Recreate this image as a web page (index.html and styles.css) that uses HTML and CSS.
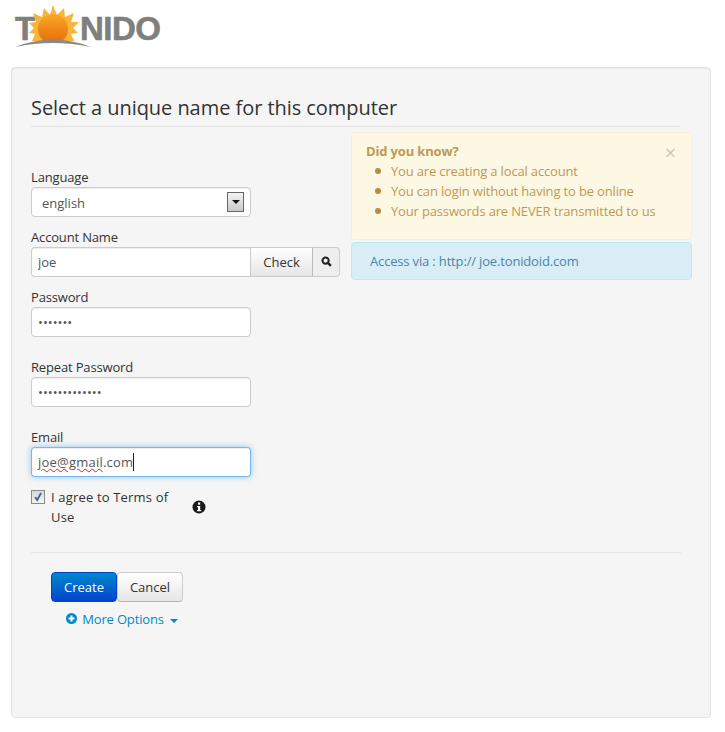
FILE: index.html
```html
<!DOCTYPE html>
<html lang="en">
<head>
    <meta charset="UTF-8">
    <title>Tonido Setup</title>
    <link rel="stylesheet" href="styles.css">
</head>
<body>
    <div class="logo">
        <span class="logo-t">T</span>
        <span class="logo-rest">NIDO</span>
        <svg class="logo-sun" width="100" height="50" viewBox="0 0 100 50">
            <defs>
                <linearGradient id="disc" x1="0" y1="0" x2="0" y2="1">
                    <stop offset="0" stop-color="#f9a825"/>
                    <stop offset="1" stop-color="#e8730c"/>
                </linearGradient>
            </defs>
            <polygon fill="#f7b53c" points="53,5 57,15 64,8 65,17 74,13 71,22 79,22 73,28 78,33 71,34 74,41 32,41 35,34 29,33 34,28 29,23 36,22 33,13 42,17 44,8 50,15"/>
            <path d="M42.8 40 A15 15 0 1 1 63.2 40 Z" fill="url(#disc)"/>
            <path d="M15 47 Q53 32 91 47 Q53 39 15 47 Z" fill="#8a8a88"/>
        </svg>
    </div>

    <div class="panel">
        <h1 class="title">Select a unique name for this computer</h1>

        <div class="columns">
            <div class="form-col">
                <div class="form-group">
                    <label>Language</label>
                    <div class="field select">
                        <span class="select-value">english</span>
                        <span class="select-arrow"></span>
                    </div>
                </div>
                <div class="form-group">
                    <label for="account">Account Name</label>
                    <div class="input-group">
                        <input class="field" type="text" id="account" value="joe">
                        <button class="btn-check">Check</button>
                        <button class="btn-search">
                            <svg width="11" height="11" viewBox="0 0 12 12">
                                <circle cx="5" cy="5" r="3.4" fill="none" stroke="#222" stroke-width="2.2"/>
                                <path d="M7.5 7.5 L10.8 10.8" stroke="#222" stroke-width="2.6"/>
                            </svg>
                        </button>
                    </div>
                </div>
                <div class="form-group tall">
                    <label for="password">Password</label>
                    <input class="field" type="password" id="password" value="1234567">
                </div>
                <div class="form-group tall">
                    <label for="repeat">Repeat Password</label>
                    <input class="field" type="password" id="repeat" value="1234567890123">
                </div>
                <div class="form-group">
                    <label>Email</label>
                    <div class="field focused">
                        <span class="misspelt">joe@gmail</span>.com<span class="caret"></span>
                    </div>
                </div>
                <div class="terms">
                    <span class="checkbox">
                        <svg width="10" height="10" viewBox="0 0 10 10">
                            <path d="M2 5 L4.2 8 L8 1" fill="none" stroke="#4a5a9c" stroke-width="1.8"/>
                        </svg>
                    </span>
                    <span class="terms-text">I agree to Terms of Use</span>
                    <svg class="info-icon" width="14" height="14" viewBox="0 0 14 14">
                        <circle cx="7" cy="7" r="6.5" fill="#1a1a1a"/>
                        <rect x="6" y="2.5" width="2.2" height="2.2" fill="#fff"/>
                        <path d="M5 6 H8.2 V10 H9.2 V11.2 H5 V10 H6 V7.2 H5 Z" fill="#fff"/>
                    </svg>
                </div>
            </div>

            <div class="side-col">
                <div class="alert alert-warn">
                    <span class="alert-close">×</span>
                    <strong>Did you know?</strong>
                    <ul>
                        <li>You are creating a local account</li>
                        <li>You can login without having to be online</li>
                        <li>Your passwords are NEVER transmitted to us</li>
                    </ul>
                </div>
                <div class="alert alert-info">Access via : http:// joe.tonidoid.com</div>
            </div>
        </div>

        <div class="actions">
            <div class="buttons">
                <button class="btn btn-primary">Create</button>
                <button class="btn">Cancel</button>
            </div>
            <a class="more" href="#">
                <svg width="11" height="11" viewBox="0 0 11 11">
                    <circle cx="5.5" cy="5.5" r="5.5" fill="#0088cc"/>
                    <path d="M2.5 5.5 H8.5 M5.5 2.5 V8.5" stroke="#fff" stroke-width="2"/>
                </svg>
                <span class="more-text">More Options</span>
                <span class="more-arrow"></span>
            </a>
        </div>
    </div>
</body>
</html>
```

FILE: styles.css
```css
* {
    box-sizing: border-box;
}
body {
    font-family: "Open Sans", Arial, sans-serif;
    font-size: 13px;
    line-height: 20px;
    letter-spacing: -0.16px;
    color: #333;
    background-color: #fff;
    margin: 0;
    padding: 0;
}

/* logo */
.logo {
    position: relative;
    height: 67px;
    padding: 9px 0 0 15px;
    display: flex;
    font-family: "Liberation Sans", Arial, sans-serif;
    font-weight: bold;
    font-size: 33px;
    line-height: 40px;
    letter-spacing: 0;
    color: #7f7f7d;
    -webkit-text-stroke: 0.6px #7f7f7d;
}
.logo-t {
    width: 65px;
}
.logo-rest {
    letter-spacing: -0.5px;
}
.logo-sun {
    position: absolute;
    left: 0;
    top: 0;
}

/* panel */
.panel {
    margin: 0 14px 0 11px;
    height: 651px;
    padding: 19px 19px 0 19px;
    background-color: #f5f5f5;
    border: 1px solid #e3e3e3;
    border-radius: 4px;
    box-shadow: inset 0 1px 1px rgba(0, 0, 0, 0.05);
}
.title {
    font-size: 20px;
    font-weight: 400;
    line-height: 42px;
    letter-spacing: -0.05px;
    margin: 0 11px 5px 0;
    height: 40px;
    border-bottom: 1px solid #e3e3e3;
}
.columns {
    display: flex;
}
.form-col {
    width: 320px;
    flex-shrink: 0;
    padding-top: 35px;
}
.side-col {
    width: 341px;
    flex-shrink: 0;
}

/* form */
.form-group {
    margin-bottom: 10px;
}
.form-group.tall {
    margin-bottom: 20px;
}
.form-group label {
    display: block;
    height: 20px;
}
.field {
    display: flex;
    align-items: center;
    width: 220px;
    height: 30px;
    padding: 0 6px;
    font-family: inherit;
    font-size: 13px;
    letter-spacing: 0;
    color: #555;
    background-color: #fff;
    border: 1px solid #ccc;
    border-radius: 4px;
    box-shadow: inset 0 1px 1px rgba(0, 0, 0, 0.075);
    white-space: pre;
}
.select {
    justify-content: space-between;
    padding: 0 6px 0 10px;
}
.select-value {
    padding-top: 2px;
}
.select-arrow {
    width: 17px;
    height: 20px;
    border: 1px solid #666;
    background: linear-gradient(#f4f4f4, #c8c8c8);
    display: flex;
    align-items: center;
    justify-content: center;
}
.select-arrow::after {
    content: "";
    border-top: 4px solid #111;
    border-left: 4px solid transparent;
    border-right: 4px solid transparent;
}
.input-group {
    display: flex;
}
.input-group .field {
    width: 219px;
    border-radius: 4px 0 0 4px;
    border-right: 0;
}
.btn-check,
.btn-search {
    height: 30px;
    font-family: inherit;
    font-size: 13px;
    color: #333;
    border: 1px solid #ccc;
    cursor: pointer;
    padding: 0;
}
.btn-check {
    width: 63px;
    background: linear-gradient(#fff, #e6e6e6);
    border-right: 1px solid #bbb;
}
.btn-search {
    width: 27px;
    margin-left: 0;
    background-color: #eee;
    border-left: 0;
    border-radius: 0 4px 4px 0;
}
.focused {
    letter-spacing: 0.22px;
    border-color: rgba(82, 168, 236, 0.8);
    box-shadow: inset 0 1px 1px rgba(0, 0, 0, 0.075), 0 0 6px rgba(82, 168, 236, 0.6);
}
.misspelt {
    text-decoration: underline wavy #d22;
    text-decoration-thickness: 1px;
}
.caret {
    display: inline-block;
    width: 1px;
    height: 18px;
    background-color: #222;
}
.terms {
    display: flex;
    margin-top: 10px;
}
.checkbox {
    width: 14px;
    height: 14px;
    margin: 3px 6px 0 0;
    display: flex;
    align-items: center;
    justify-content: center;
    border: 1px solid #8a8a8a;
    background: linear-gradient(#d8d8d8, #f4f4f4);
    flex-shrink: 0;
}
.terms-text {
    width: 130px;
    letter-spacing: 0.17px;
}
.info-icon {
    margin: 13px 0 0 11px;
}

/* alerts */
.alert {
    border-radius: 4px;
    margin-bottom: 2px;
}
.alert-warn {
    position: relative;
    height: 108px;
    padding: 8px 14px;
    color: #c09853;
    background-color: #fcf8e3;
    border: 1px solid #fbeed5;
}
.alert-warn ul {
    margin: 0;
    padding: 0 0 0 9px;
    list-style: none;
}
.alert-warn li {
    display: flex;
    align-items: center;
}
.alert-warn li::before {
    content: "";
    width: 6px;
    height: 6px;
    margin-right: 10px;
    border-radius: 50%;
    background-color: #b88a45;
}
.alert-close {
    position: absolute;
    top: 10px;
    right: 15px;
    font-size: 20px;
    color: #000;
    opacity: 0.2;
}
.alert-info {
    height: 38px;
    padding: 8px 18px;
    color: #4a86a8;
    background-color: #d9edf7;
    border: 1px solid #bce8f1;
}

/* bottom buttons */
.actions {
    width: 650px;
    margin-top: 25px;
    padding: 19px 0 0 20px;
    border-top: 1px solid #e3e3e3;
}
.buttons {
    display: flex;
}
.btn {
    width: 66px;
    height: 30px;
    font-family: inherit;
    font-size: 13px;
    color: #333;
    background: linear-gradient(#fff, #e6e6e6);
    border: 1px solid #ccc;
    border-bottom-color: #b3b3b3;
    border-radius: 4px;
    cursor: pointer;
    padding: 0;
}
.btn-primary {
    color: #fff;
    background: linear-gradient(#0088cc, #0044cc);
    border-color: #04c;
}
.more {
    display: block;
    margin: 7px 0 0 15px;
    color: #0088cc;
    text-decoration: none;
}
.more-text {
    margin-left: 2px;
}
.more-arrow {
    display: inline-block;
    vertical-align: middle;
    margin-left: 3px;
    border-top: 4px solid #0088cc;
    border-left: 4px solid transparent;
    border-right: 4px solid transparent;
}
```
